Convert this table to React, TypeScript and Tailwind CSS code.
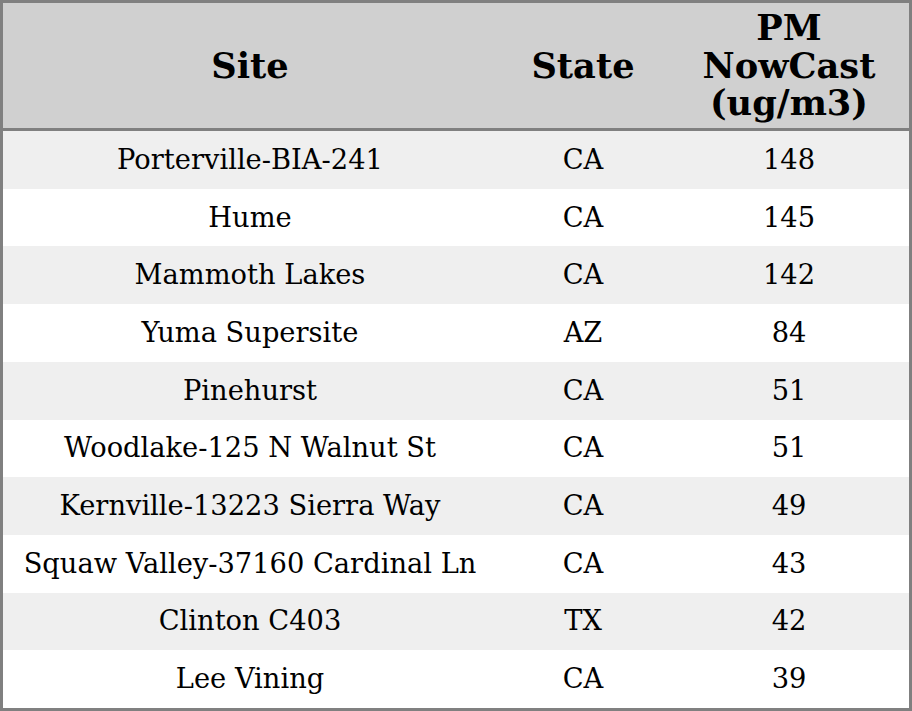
import React from "react";

const rows: [string, string, string][] = [
  ["Porterville-BIA-241", "CA", "148"],
  ["Hume", "CA", "145"],
  ["Mammoth Lakes", "CA", "142"],
  ["Yuma Supersite", "AZ", "84"],
  ["Pinehurst", "CA", "51"],
  ["Woodlake-125 N Walnut St", "CA", "51"],
  ["Kernville-13223 Sierra Way", "CA", "49"],
  ["Squaw Valley-37160 Cardinal Ln", "CA", "43"],
  ["Clinton C403", "TX", "42"],
  ["Lee Vining", "CA", "39"],
];

export default function App() {
  return (
    <div
      className="w-[912px] h-[711px] border-[3px] border-[#808080] bg-white text-black flex flex-col"
      style={{ fontFamily: '"DejaVu Serif", serif' }}
    >
      <div className="flex h-[125px] bg-[#d0d0d0] border-b-[3px] border-[#808080] box-content font-bold text-[35.2px] leading-[37.5px] text-center">
        <div className="w-[494px] flex items-center justify-center">Site</div>
        <div className="w-[172px] flex items-center justify-center">State</div>
        <div className="flex-1 flex items-center justify-center">
          PM
          <br />
          NowCast
          <br />
          (ug/m3)
        </div>
      </div>
      <div className="flex-1 flex flex-col text-[27.3px] leading-[32px]">
        {rows.map((r, i) => (
          <div
            key={i}
            className={`flex flex-1 items-center text-center ${i % 2 === 0 ? "bg-[#efefef]" : "bg-white"}`}
          >
            <div className="w-[494px]">{r[0]}</div>
            <div className="w-[172px]">{r[1]}</div>
            <div className="flex-1">{r[2]}</div>
          </div>
        ))}
      </div>
    </div>
  );
}
